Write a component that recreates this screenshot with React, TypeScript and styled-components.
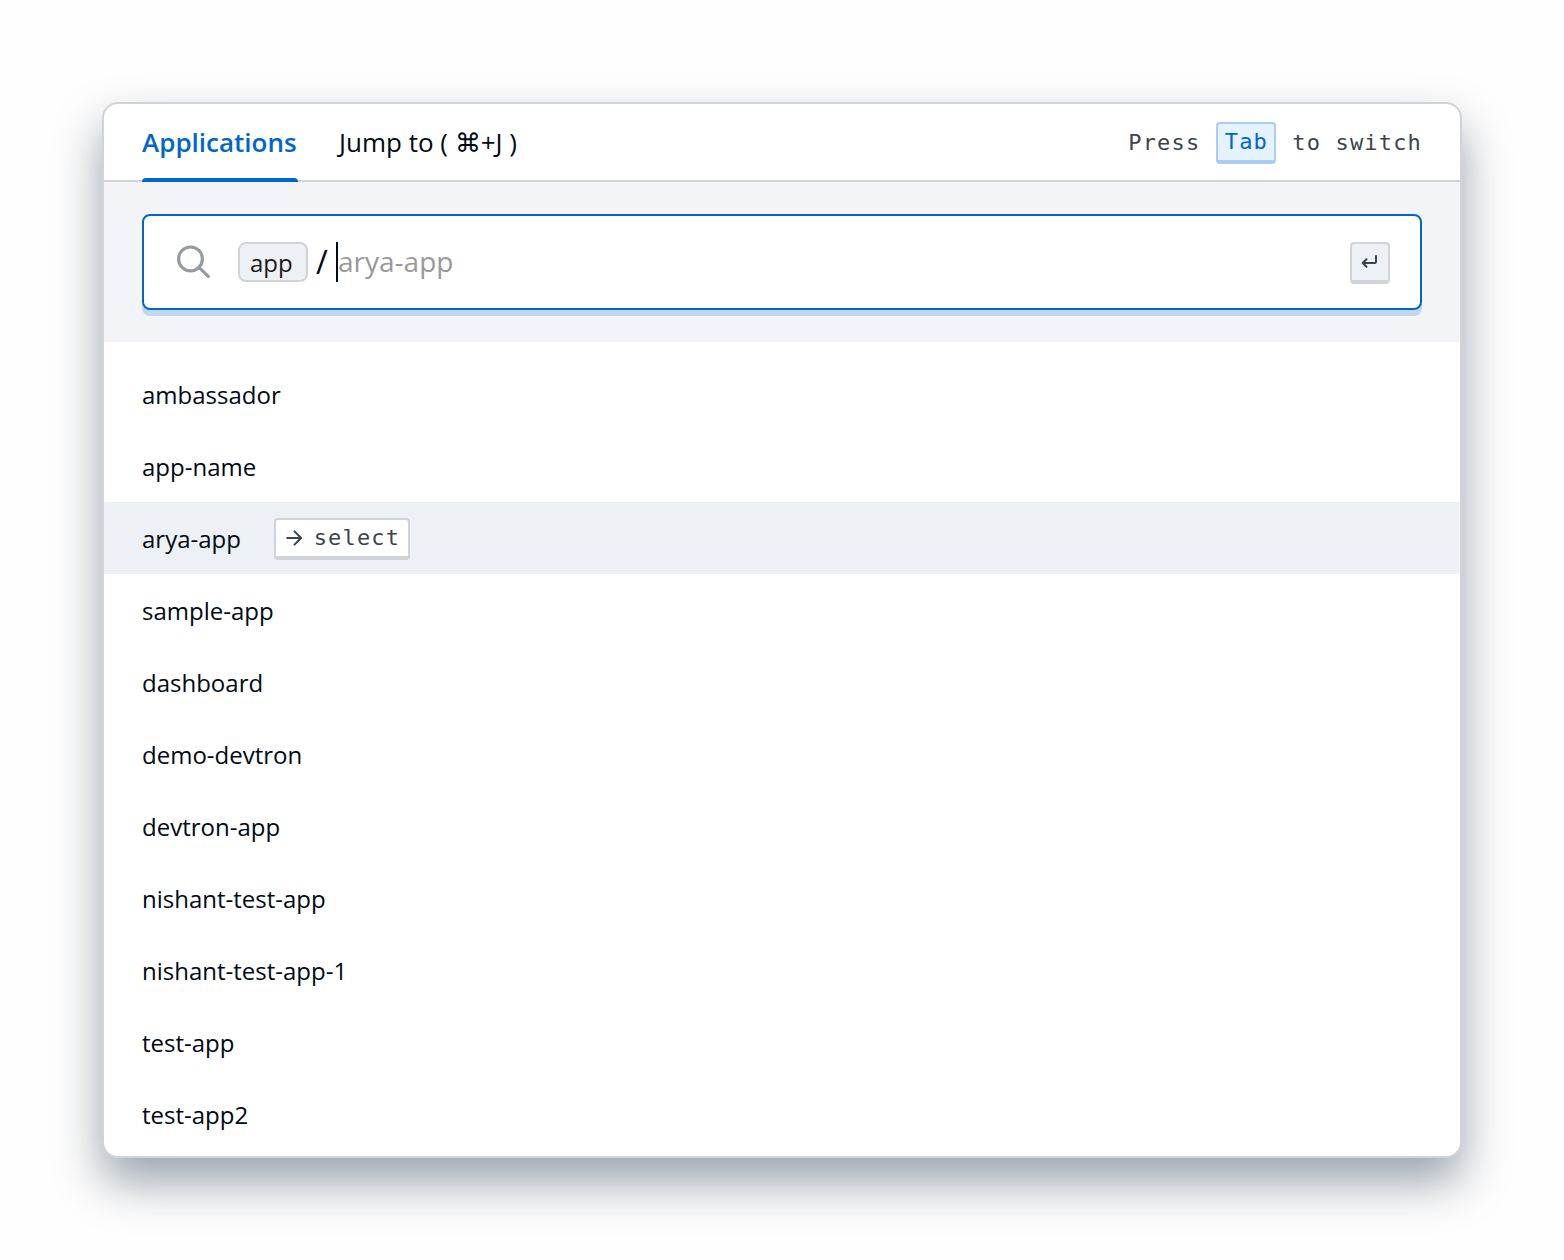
import React from 'react';
import styled, { createGlobalStyle } from 'styled-components';

const GlobalStyle = createGlobalStyle`
  *, *::before, *::after { box-sizing: border-box; }
  body {
    margin: 0;
    background: #fefefe;
    color: #000a14;
    font-family: "Open Sans", "Noto Sans", sans-serif;
  }
`;

const mono = `"DejaVu Sans Mono", "Liberation Mono", monospace`;

const Page = styled.main`
  min-height: 1260px;
  padding: 102px;
`;

const Dialog = styled.section`
  height: 1056px;
  border: 2px solid #d0d4d9;
  border-radius: 16px;
  background: #fff;
  box-shadow: 0 24px 48px rgba(0, 26, 50, 0.4);
`;

const Header = styled.header`
  display: flex;
  align-items: stretch;
  justify-content: space-between;
  height: 78px;
  padding: 0 38px;
  border-bottom: 2px solid #d0d4d9;
`;

const Tabs = styled.nav`
  display: flex;
  gap: 41px;
`;

const Tab = styled.div<{ $active?: boolean }>`
  position: relative;
  display: flex;
  align-items: center;
  min-width: 156px;
  font-size: 26px;
  line-height: 40px;
  white-space: pre;
  font-weight: ${(p) => (p.$active ? 600 : 400)};
  color: ${(p) => (p.$active ? '#0066cc' : '#000a14')};

  &::after {
    content: '';
    display: ${(p) => (p.$active ? 'block' : 'none')};
    position: absolute;
    left: 0;
    right: 0;
    bottom: -2px;
    height: 4px;
    border-radius: 4px 4px 0 0;
    background: #0066cc;
  }
`;

const Hint = styled.div`
  display: flex;
  align-items: center;
  gap: 16px;
  font-family: ${mono};
  font-size: 22px;
  letter-spacing: 1.16px;
  line-height: 36px;
  color: #3b444c;
`;

const HintText = styled.span`
  padding-top: 2px;
`;

const Key = styled.kbd<{ $tone?: 'blue' | 'grey' }>`
  display: inline-flex;
  align-items: center;
  justify-content: center;
  gap: 10px;
  height: 42px;
  min-width: ${(p) => (p.$tone === 'blue' ? 60 : p.$tone === 'grey' ? 40 : 136)}px;
  margin-top: 2px;
  border: 2px solid;
  border-bottom-width: 4px;
  border-radius: 4px;
  font-family: ${mono};
  font-size: 22px;
  letter-spacing: 1.16px;
  line-height: 36px;
  color: ${(p) => (p.$tone === 'blue' ? '#0066cc' : '#3b444c')};
  border-color: ${(p) => (p.$tone === 'blue' ? '#a9cdf3' : '#d0d4d9')};
  background: ${(p) =>
    p.$tone === 'blue' ? '#e5f2ff' : p.$tone === 'grey' ? '#edf0f4' : '#fff'};
`;

const SearchArea = styled.div`
  height: 160px;
  padding: 32px 38px;
  background: #f2f4f7;
`;

const SearchBox = styled.div`
  display: flex;
  align-items: center;
  height: 96px;
  padding: 0 30px;
  border: 2px solid #0066cc;
  border-radius: 8px;
  background: #fff;
  box-shadow: 0 6px 0 #c2d7ee;
`;

const Scope = styled.span`
  width: 70px;
  height: 40px;
  padding-left: 10px;
  margin-left: 24px;
  border: 2px solid #d0d4d9;
  border-radius: 8px;
  background: #edf0f4;
  font-size: 24px;
  line-height: 38px;
  color: #1a1a1a;
`;

const Slash = styled.span`
  width: 12px;
  margin-left: 8px;
  font-size: 32px;
  line-height: 40px;
`;

const Caret = styled.span`
  width: 2px;
  height: 40px;
  margin-left: 8px;
  background: #000a14;
`;

const Placeholder = styled.span`
  flex: 1;
  padding-bottom: 2px;
  font-size: 28px;
  line-height: 40px;
  color: #999;
`;

const List = styled.ul`
  margin: 0;
  padding: 16px 0 0;
  list-style: none;
`;

const Item = styled.li<{ $selected?: boolean }>`
  display: flex;
  align-items: center;
  gap: 33px;
  height: 72px;
  padding: 0 38px;
  font-size: 24px;
  line-height: 40px;
  background: ${(p) => (p.$selected ? '#edf0f5' : 'transparent')};
`;

const Name = styled.span`
  padding-top: 2px;
`;

const SearchIcon = () => (
  <svg width="40" height="40" viewBox="0 0 40 40" fill="none" stroke="#959ba1" strokeWidth="3.2" strokeLinecap="round">
    <circle cx="16.5" cy="16.9" r="11.9" />
    <path d="M25 25.3 34.3 34.3" />
  </svg>
);

const ReturnIcon = () => (
  <svg width="20" height="20" viewBox="0 0 20 20" fill="none" stroke="#3b444c" strokeWidth="2" strokeLinecap="round" strokeLinejoin="round">
    <path d="M6.5 7.2 2.7 11l3.8 3.8M2.7 11h12q1.3 0 1.3-1.3V4" />
  </svg>
);

const ArrowIcon = () => (
  <svg width="20" height="20" viewBox="0 0 20 20" fill="none" stroke="#3b444c" strokeWidth="2" strokeLinecap="round" strokeLinejoin="round">
    <path d="M3.2 10h14M10.5 3.4l6.6 6.6-6.6 6.6" />
  </svg>
);

const apps = [
  'ambassador', 'app-name', 'arya-app', 'sample-app', 'dashboard', 'demo-devtron',
  'devtron-app', 'nishant-test-app', 'nishant-test-app-1', 'test-app', 'test-app2',
];

export default function App() {
  const selected = 'arya-app';
  return (
    <Page>
      <GlobalStyle />
      <Dialog>
        <Header>
          <Tabs>
            <Tab $active>Applications</Tab>
            <Tab>Jump to ( ⌘+J )</Tab>
          </Tabs>
          <Hint>
            <HintText>Press</HintText>
            <Key $tone="blue">Tab</Key>
            <HintText>to switch</HintText>
          </Hint>
        </Header>
        <SearchArea>
          <SearchBox>
            <SearchIcon />
            <Scope>app</Scope>
            <Slash>/</Slash>
            <Caret />
            <Placeholder>{selected}</Placeholder>
            <Key $tone="grey"><ReturnIcon /></Key>
          </SearchBox>
        </SearchArea>
        <List>
          {apps.map((name) => (
            <Item key={name} $selected={name === selected}>
              <Name>{name}</Name>
              {name === selected && <Key><ArrowIcon />select</Key>}
            </Item>
          ))}
        </List>
      </Dialog>
    </Page>
  );
}
